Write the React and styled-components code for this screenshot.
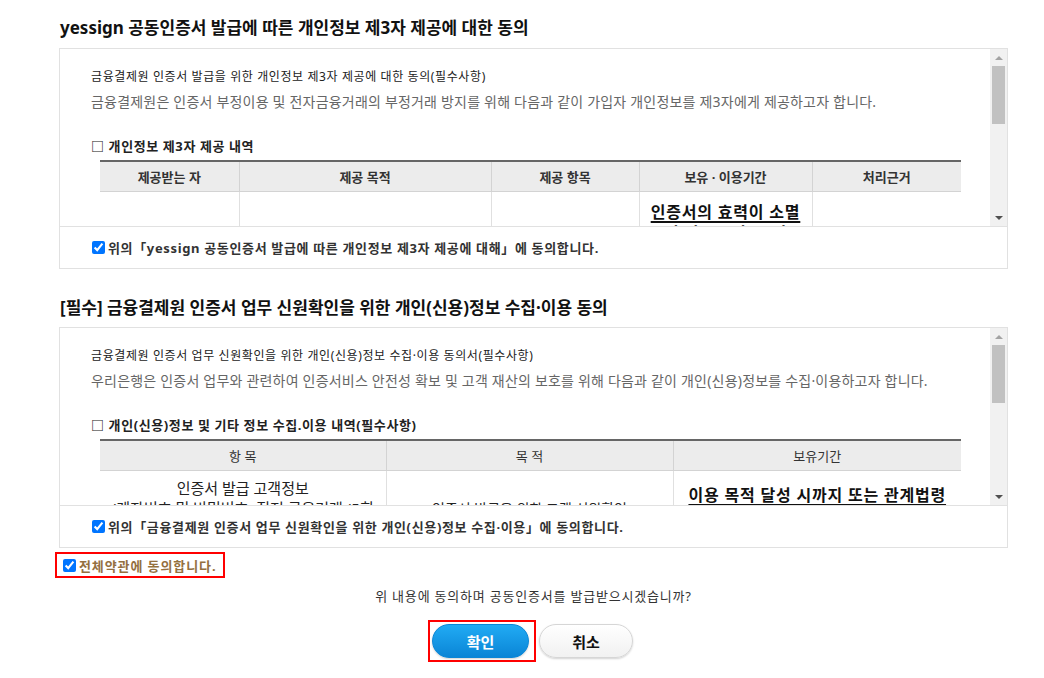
import React from 'react';
import styled, { createGlobalStyle } from 'styled-components';

const GlobalStyle = createGlobalStyle`
  html, body { margin: 0; padding: 0; background: #fff; }
  body {
    font-family: "Noto Sans", "Noto Sans CJK KR", sans-serif;
    color: #333;
  }
  * { box-sizing: border-box; }
`;

const Page = styled.div`
  width: 1008px;
  padding: 17px 0 0 59px;
`;

const Heading = styled.h2`
  margin: ${p => (p.$first ? '0' : '28px')} 0 ${p => (p.$first ? '9px' : '8px')} 1px;
  font-size: 17px;
  line-height: 22px;
  font-weight: 700;
  color: #111;
`;

const AgreeBox = styled.div`
  border: 1px solid #e1e1e1;
  background: #fff;
`;

const ScrollArea = styled.div`
  display: flex;
  height: 178px;
  border-bottom: 1px solid #e1e1e1;
`;

const ScrollContent = styled.div`
  flex: 1;
  min-width: 0;
  overflow: hidden;
  padding: 19px 30px 0 31px;
`;

const DocTitle = styled.div`
  font-size: 12px;
  line-height: 18px;
  color: #222;
  letter-spacing: 0.6px;
`;

const DocDesc = styled.div`
  margin-top: 5px;
  font-size: 14px;
  line-height: 22px;
  color: #666;
  letter-spacing: 0.2px;
`;

const SubTitle = styled.div`
  margin-top: 23px;
  font-size: 13px;
  line-height: 20px;
  font-weight: 700;
  color: #222;
  letter-spacing: 0.6px;
`;

const Table = styled.table`
  margin: 4px 0 0 9px;
  width: 861px;
  border-collapse: collapse;
  table-layout: fixed;
  border-top: 2px solid #666;
`;

const Th = styled.th`
  height: 30px;
  padding: 0;
  background: #ececec;
  font-size: 13px;
  font-weight: ${p => (p.$light ? 400 : 700)};
  color: #333;
  border-bottom: 1px solid #d3d3d3;
  & + & { border-left: 1px solid #d3d3d3; }
`;

const Td = styled.td`
  vertical-align: top;
  text-align: center;
  padding: ${p => p.$pt || 0}px ${p => p.$px ?? 6}px 0;
  height: 120px;
  font-size: ${p => p.$size || 13}px;
  line-height: ${p => p.$lh || 20}px;
  color: #222;
  & + & { border-left: 1px solid #e0e0e0; }
`;

const Period = styled.span`
  font-size: 16px;
  font-weight: 700;
  color: #111;
  letter-spacing: 0.8px;
  text-decoration: underline;
  text-decoration-thickness: 2px;
  text-underline-offset: 3px;
`;

const Scrollbar = styled.div`
  width: 17px;
  flex: none;
  background: #f1f1f1;
  display: flex;
  flex-direction: column;
  align-items: center;
`;

const ArrowBtn = styled.div`
  height: 17px;
  width: 17px;
  display: flex;
  align-items: center;
  justify-content: center;
  &::before {
    content: '';
    width: 0;
    height: 0;
    border-left: 4px solid transparent;
    border-right: 4px solid transparent;
    ${p =>
      p.$down
        ? 'border-top: 4px solid #505050;'
        : 'border-bottom: 4px solid #a3a3a3;'}
  }
`;

const Thumb = styled.div`
  width: 13px;
  height: 58px;
  background: #c1c1c1;
`;

const Track = styled.div`
  flex: 1;
`;

const CheckRow = styled.label`
  display: flex;
  align-items: center;
  gap: 3px;
  height: 41px;
  padding-left: 32px;
  font-size: 13px;
  font-weight: 700;
  color: #333;
  letter-spacing: 0.65px;
`;

const Check = styled.input.attrs({ type: 'checkbox' })`
  width: 13px;
  height: 13px;
  margin: 0;
  accent-color: #0075ff;
  flex: none;
`;

const AllAgree = styled.label`
  display: inline-flex;
  align-items: center;
  gap: 3px;
  margin: 4px 0 0 -4px;
  height: 26px;
  padding: 0 7px 0 6px;
  border: 2px solid #ff0000;
  font-size: 13px;
  font-weight: 700;
  color: #94703f;
  letter-spacing: 0.9px;
`;

const Question = styled.p`
  margin: 9px 0 0;
  width: 949px;
  text-align: center;
  font-size: 13px;
  line-height: 18px;
  color: #333;
  letter-spacing: 0.8px;
`;

const ButtonRow = styled.div`
  display: flex;
  justify-content: center;
  gap: 3px;
  width: 949px;
  margin-top: 15px;
  padding-right: 6px;
`;

const Highlight = styled.div`
  border: 2px solid #ff0000;
  padding: 2px 5px 2px 2px;
`;

const Button = styled.button`
  width: ${p => (p.$primary ? 97 : 94)}px;
  height: 34px;
  margin-top: ${p => (p.$primary ? 0 : 4)}px;
  border-radius: 17px;
  font-family: inherit;
  font-size: 15px;
  font-weight: 700;
  cursor: pointer;
  border: ${p => (p.$primary ? '1px solid #0b86d6' : '1px solid #d6d6d6')};
  color: ${p => (p.$primary ? '#fff' : '#111')};
  background: ${p =>
    p.$primary
      ? 'linear-gradient(#21abf4, #0a85d6)'
      : 'linear-gradient(#ffffff, #f1f1f1)'};
  box-shadow: 0 1px 2px rgba(0, 0, 0, 0.18);
`;

function FakeScrollbar() {
  return (
    <Scrollbar>
      <ArrowBtn />
      <Thumb />
      <Track />
      <ArrowBtn $down />
    </Scrollbar>
  );
}

export default function App() {
  return (
    <>
      <GlobalStyle />
      <Page>
        <Heading $first>yessign 공동인증서 발급에 따른 개인정보 제3자 제공에 대한 동의</Heading>
        <AgreeBox>
          <ScrollArea>
            <ScrollContent>
              <DocTitle>금융결제원 인증서 발급을 위한 개인정보 제3자 제공에 대한 동의(필수사항)</DocTitle>
              <DocDesc>
                금융결제원은 인증서 부정이용 및 전자금융거래의 부정거래 방지를 위해 다음과 같이 가입자 개인정보를 제3자에게 제공하고자 합니다.
              </DocDesc>
              <SubTitle>□ 개인정보 제3자 제공 내역</SubTitle>
              <Table>
                <colgroup>
                  <col style={{ width: 139 }} />
                  <col style={{ width: 252 }} />
                  <col style={{ width: 148 }} />
                  <col style={{ width: 173 }} />
                  <col style={{ width: 149 }} />
                </colgroup>
                <thead>
                  <tr>
                    <Th>제공받는 자</Th>
                    <Th>제공 목적</Th>
                    <Th>제공 항목</Th>
                    <Th>보유 · 이용기간</Th>
                    <Th>처리근거</Th>
                  </tr>
                </thead>
                <tbody>
                  <tr>
                    <Td />
                    <Td />
                    <Td />
                    <Td $pt={10} $lh={20}>
                      <Period>인증서의 효력이 소멸 된 날로부터 10년</Period>
                    </Td>
                    <Td />
                  </tr>
                </tbody>
              </Table>
            </ScrollContent>
            <FakeScrollbar />
          </ScrollArea>
          <CheckRow>
            <Check defaultChecked />
            위의「yessign 공동인증서 발급에 따른 개인정보 제3자 제공에 대해」에 동의합니다.
          </CheckRow>
        </AgreeBox>

        <Heading>[필수] 금융결제원 인증서 업무 신원확인을 위한 개인(신용)정보 수집·이용 동의</Heading>
        <AgreeBox>
          <ScrollArea>
            <ScrollContent>
              <DocTitle>금융결제원 인증서 업무 신원확인을 위한 개인(신용)정보 수집·이용 동의서(필수사항)</DocTitle>
              <DocDesc>
                우리은행은 인증서 업무와 관련하여 인증서비스 안전성 확보 및 고객 재산의 보호를 위해 다음과 같이 개인(신용)정보를 수집·이용하고자 합니다.
              </DocDesc>
              <SubTitle>□ 개인(신용)정보 및 기타 정보 수집.이용 내역(필수사항)</SubTitle>
              <Table>
                <colgroup>
                  <col style={{ width: 286 }} />
                  <col style={{ width: 287 }} />
                  <col style={{ width: 288 }} />
                </colgroup>
                <thead>
                  <tr>
                    <Th $light>항 목</Th>
                    <Th $light>목 적</Th>
                    <Th $light>보유기간</Th>
                  </tr>
                </thead>
                <tbody>
                  <tr>
                    <Td $pt={7} $size={15}>
                      인증서 발급 고객정보
                      <br />
                      (계좌번호 및 비밀번호, 직전 금융거래 (5회 이내) 내역 등)
                    </Td>
                    <Td $pt={28} $size={14}>
                      인증서 발급을 위한 고객 신원확인
                    </Td>
                    <Td $pt={13} $px={12} $lh={22}>
                      <Period>이용 목적 달성 시까지 또는 관계법령 등에 따른 보존기간</Period>
                    </Td>
                  </tr>
                </tbody>
              </Table>
            </ScrollContent>
            <FakeScrollbar />
          </ScrollArea>
          <CheckRow>
            <Check defaultChecked />
            위의「금융결제원 인증서 업무 신원확인을 위한 개인(신용)정보 수집·이용」에 동의합니다.
          </CheckRow>
        </AgreeBox>

        <AllAgree>
          <Check defaultChecked />
          전체약관에 동의합니다.
        </AllAgree>

        <Question>위 내용에 동의하며 공동인증서를 발급받으시겠습니까?</Question>

        <ButtonRow>
          <Highlight>
            <Button $primary>확인</Button>
          </Highlight>
          <Button>취소</Button>
        </ButtonRow>
      </Page>
    </>
  );
}
